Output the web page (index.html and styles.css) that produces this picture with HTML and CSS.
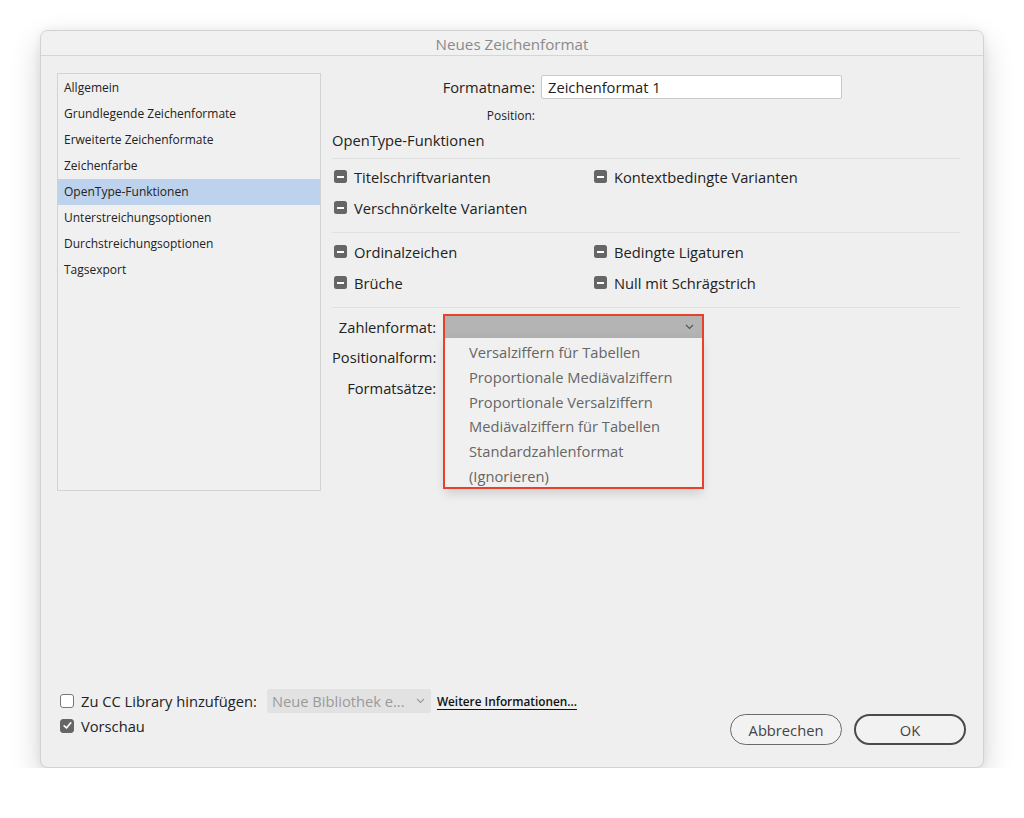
FILE: index.html
```html
<!DOCTYPE html>
<html lang="de">
<head>
<meta charset="utf-8">
<title>Neues Zeichenformat</title>
<link rel="stylesheet" href="styles.css">
</head>
<body>
<div class="window">
  <div class="titlebar">Neues Zeichenformat</div>
  <div class="content">
    <ul class="sidebar">
      <li>Allgemein</li>
      <li>Grundlegende Zeichenformate</li>
      <li>Erweiterte Zeichenformate</li>
      <li>Zeichenfarbe</li>
      <li class="selected">OpenType-Funktionen</li>
      <li>Unterstreichungsoptionen</li>
      <li>Durchstreichungsoptionen</li>
      <li>Tagsexport</li>
    </ul>
    <div class="main">
      <div class="name-grid">
        <span class="lbl">Formatname:</span>
        <div class="textfield">Zeichenformat 1</div>
        <span class="lbl small">Position:</span>
        <span></span>
      </div>
      <div class="section-title">OpenType-Funktionen</div>
      <div class="group">
        <div class="opt"><span class="mixed"></span>Titelschriftvarianten</div>
        <div class="opt"><span class="mixed"></span>Kontextbedingte Varianten</div>
        <div class="opt"><span class="mixed"></span>Verschnörkelte Varianten</div>
      </div>
      <div class="group">
        <div class="opt"><span class="mixed"></span>Ordinalzeichen</div>
        <div class="opt"><span class="mixed"></span>Bedingte Ligaturen</div>
        <div class="opt"><span class="mixed"></span>Brüche</div>
        <div class="opt"><span class="mixed"></span>Null mit Schrägstrich</div>
      </div>
      <div class="form-grid">
        <span class="lbl">Zahlenformat:</span>
        <div class="select-wrap">
          <div class="select-open">
            <svg class="chev" width="9" height="6" viewBox="0 0 9 6"><path d="M1 1 L4.5 4.5 L8 1" fill="none" stroke="#555" stroke-width="1.2"/></svg>
          </div>
          <ul class="menu">
            <li>Versalziffern für Tabellen</li>
            <li>Proportionale Mediävalziffern</li>
            <li>Proportionale Versalziffern</li>
            <li>Mediävalziffern für Tabellen</li>
            <li>Standardzahlenformat</li>
            <li>(Ignorieren)</li>
          </ul>
          <div class="highlight"></div>
        </div>
        <span class="lbl">Positionalform:</span>
        <span></span>
        <span class="lbl">Formatsätze:</span>
        <span></span>
      </div>
    </div>
  </div>
  <div class="footer">
    <div class="footer-left">
      <div class="frow">
        <span class="cb"></span>
        <span class="ftext">Zu CC Library hinzufügen:</span>
        <div class="libselect">Neue Bibliothek e...
          <svg class="chev2" width="9" height="6" viewBox="0 0 9 6"><path d="M1 1 L4.5 4.5 L8 1" fill="none" stroke="#999" stroke-width="1.1"/></svg>
        </div>
        <a class="more">Weitere Informationen...</a>
      </div>
      <div class="frow">
        <span class="cb checked"><svg width="13" height="13" viewBox="0 0 13 13"><path d="M3.2 6.8 L5.5 9 L9.8 3.8" fill="none" stroke="#fff" stroke-width="1.7" stroke-linecap="round" stroke-linejoin="round"/></svg></span>
        <span class="ftext">Vorschau</span>
      </div>
    </div>
    <div class="buttons">
      <button class="btn">Abbrechen</button>
      <button class="btn primary">OK</button>
    </div>
  </div>
</div>
</body>
</html>
```
FILE: styles.css
```css
* { box-sizing: border-box; }
html, body { margin: 0; padding: 0; background: #ffffff; }
body {
  font-family: "Open Sans", "Noto Sans", sans-serif;
  color: #222;
  padding: 30px 0 0 40px;
}
.window {
  width: 944px;
  height: 738px;
  background: #efefef;
  border: 1px solid #d2d2d2;
  border-radius: 8px;
  box-shadow: 0 12px 30px rgba(0,0,0,0.18), 0 0 8px rgba(0,0,0,0.06);
  display: flex;
  flex-direction: column;
  overflow: hidden;
}
.titlebar {
  height: 25px;
  flex: none;
  border-bottom: 1px solid #d5d5d5;
  background: #f1f1f1;
  text-align: center;
  font-size: 15.2px;
  line-height: 26px;
  color: #8a8a8a;
}
.content {
  flex: 1;
  display: flex;
  padding: 17px 0 0 16px;
}
.sidebar {
  list-style: none;
  margin: 0;
  padding: 1px 0 0 0;
  width: 264px;
  height: 418px;
  border: 1px solid #d3d3d3;
  background: #f0f0f0;
  font-size: 12px;
}
.sidebar li {
  height: 26px;
  line-height: 26px;
  padding-left: 6px;
}
.sidebar li.selected { background: #bdd2ec; }
.main {
  margin-left: 11px;
  width: 628px;
  font-size: 14.7px;
}
.name-grid {
  display: grid;
  grid-template-columns: 203px 301px;
  column-gap: 6px;
  row-gap: 6px;
  align-items: center;
  margin-top: 2px;
}
.lbl { text-align: right; white-space: nowrap; }
.lbl.small { font-size: 12px; height: 21px; line-height: 22px; }
.textfield {
  height: 24px;
  background: #fff;
  border: 1px solid #c9c9c9;
  border-radius: 2px;
  padding-left: 6px;
  line-height: 23px;
}
.section-title {
  margin-top: 2px;
  height: 31px;
  line-height: 24px;
  border-bottom: 1px solid #e0e0e0;
}
.group {
  display: grid;
  grid-template-columns: 260px 1fr;
  grid-auto-rows: 31px;
  padding: 2px 0 9px 2px;
  border-bottom: 1px solid #e0e0e0;
}
.group + .group { padding-top: 3px; }
.opt {
  display: flex;
  align-items: center;
  gap: 7px;
  white-space: nowrap;
}
.mixed {
  width: 13px;
  height: 13px;
  border-radius: 2.5px;
  background: #666;
  position: relative;
  flex: none;
}
.mixed::after {
  content: "";
  position: absolute;
  left: 3px;
  top: 5.5px;
  width: 7px;
  height: 2px;
  background: #fff;
}
.form-grid {
  display: grid;
  grid-template-columns: 104px 257px;
  grid-template-rows: 30px 30px 31px;
  column-gap: 9px;
  align-items: center;
  padding-top: 4px;
}
.select-wrap { position: relative; height: 22px; }
.select-open {
  height: 22px;
  background: #b4b4b4;
  position: relative;
}
.chev { position: absolute; right: 8px; top: 8px; }
.menu {
  position: absolute;
  left: 0;
  top: 22px;
  width: 257px;
  margin: 0;
  padding: 2px 0 0 0;
  list-style: none;
  background: #f0f0f0;
  box-shadow: 0 4px 10px rgba(0,0,0,0.15);
  z-index: 2;
  color: #666;
}
.menu li {
  height: 24.8px;
  line-height: 24.8px;
  padding-left: 24px;
}
.highlight {
  position: absolute;
  left: -2px;
  top: -2px;
  width: 261px;
  height: 175px;
  border: 2px solid #e9402b;
  z-index: 3;
  pointer-events: none;
}
.footer {
  flex: none;
  display: flex;
  justify-content: space-between;
  align-items: flex-end;
  padding: 0 17px 22px 19px;
}
.footer-left { display: flex; flex-direction: column; margin-bottom: 7px; }
.frow {
  display: flex;
  align-items: center;
  height: 25px;
  font-size: 14.7px;
}
.cb {
  width: 14px;
  height: 14px;
  border: 1px solid #777;
  border-radius: 3px;
  background: #fff;
  margin-right: 7px;
  flex: none;
  display: flex;
}
.cb.checked { background: #666; border-color: #666; }
.cb.checked svg { margin: -0.5px; }
.libselect {
  margin-left: 10px;
  width: 164px;
  height: 24px;
  background: #e2e2e2;
  border-radius: 2px;
  color: #9a9a9a;
  padding-left: 5px;
  line-height: 24px;
  position: relative;
}
.chev2 { position: absolute; right: 6px; top: 9px; }
.more {
  margin-left: 6px;
  font-size: 11.8px;
  font-weight: 600;
  color: #111;
  text-decoration: underline;
  text-underline-offset: 3px;
}
.buttons { display: flex; gap: 12px; }
.btn {
  width: 112px;
  height: 31px;
  border-radius: 16px;
  border: 1px solid #6a6a6a;
  background: #f2f2f2;
  font-family: inherit;
  font-size: 14.7px;
  color: #444;
  padding: 0;
}
.btn.primary { border: 2px solid #4a4a4a; }
```
